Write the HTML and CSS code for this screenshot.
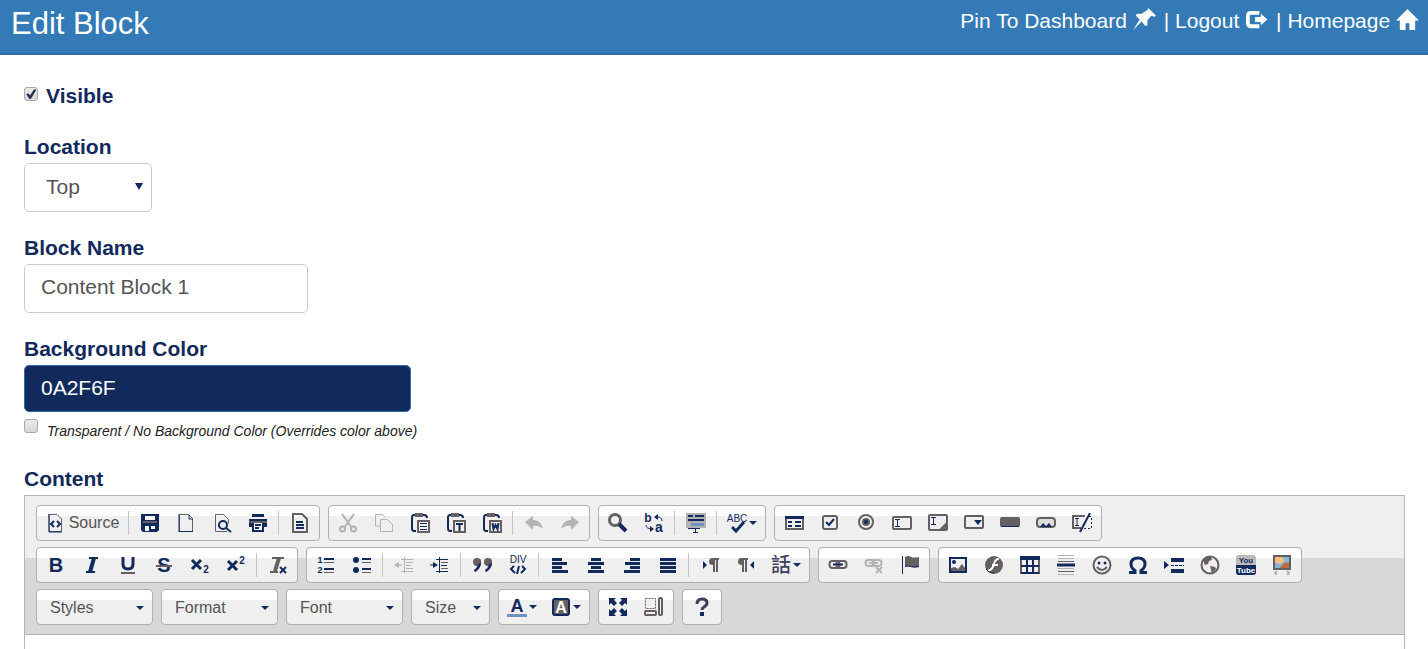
FILE: index.html
```html
<!DOCTYPE html>
<html lang="en">

<head>
    <meta charset="UTF-8">
    <title>Edit Block</title>
    <link rel="stylesheet" href="styles.css">
</head>

<body>
    <!-- icons -->
    <svg class="sprite" aria-hidden="true">
        <symbol id="i-pin" viewBox="0 0 24 24"><path d="M16 0l8 8-2 1-3-1-4 5 0 5-2 1-4-5-9 9 7-11-4-4 1-2h5l6-4z" fill="#fff"/></symbol>
        <symbol id="i-logout" viewBox="0 0 24 24"><path d="M15 5H6Q3 5 3 8v8q0 3 3 3h9" fill="none" stroke="#fff" stroke-width="4"/><path d="M10 9h6V5l8 7-8 7v-4h-6z" fill="#fff" stroke="#337ab7" stroke-width="1"/></symbol>
        <symbol id="i-home" viewBox="0 0 24 24"><path d="M12 1l12 12h-4v10h-6v-7h-4v7H4V13H0z" fill="#fff"/></symbol>

        <symbol id="i-source" viewBox="0 0 20 20"><path class="g" d="M4 1.500h8l4.500 4.500v12.500H4z"/><path class="n" d="M4 1v18h13"/><path class="n2" d="M9 8l-3 3 3 3M12 8l3 3-3 3"/></symbol>
        <symbol id="i-save" viewBox="0 0 20 20"><path class="fn" d="M1 1h18v16l-2 2H3l-2-2z"/><path class="w" d="M5 3h10v4H5zM5 13h4v5H5zM11 13h4v3h-4z"/><path class="fg" d="M3 8h14v2H3z"/></symbol>
        <symbol id="i-new" viewBox="0 0 20 20"><path class="g" d="M3.500 1.500h9l4 4v13h-13z"/><path class="n" d="M3 1v18M3 18.500h14M13 2v4h4"/></symbol>
        <symbol id="i-preview" viewBox="0 0 20 20"><path class="g" d="M15 18.500H3.500v-17h8l5 5v4"/><circle class="n2" cx="11" cy="12" r="4"/><path class="n2" d="M14 15l5 4"/></symbol>
        <symbol id="i-print" viewBox="0 0 20 20"><path class="fn" d="M4 1h12v3H4zM1 6h18v8h-3v5H4v-5H1z"/><path class="fg" d="M1 8h18v2H1z"/><path class="w" d="M6 10h8v7H6z"/><path class="n2" d="M7 12h6M7 15h4"/></symbol>
        <symbol id="i-template" viewBox="0 0 20 20"><path class="g2" d="M3 1h9l5 5v13H3z"/><path class="n2" d="M6 9h7M6 12h8M6 15h8"/></symbol>

        <symbol id="i-cut" viewBox="0 0 20 20"><path class="l2" d="M4 1l10 14M16 1L6 15"/><circle class="l2" cx="4.500" cy="16" r="2.500"/><circle class="l2" cx="15.500" cy="16" r="2.500"/></symbol>
        <symbol id="i-copy" viewBox="0 0 20 20"><path class="l" d="M6 13H1.500V1.500h7l3 3"/><path class="l" d="M6.500 6.500h7l5 5v7h-12z"/></symbol>
        <symbol id="i-clip" viewBox="0 0 20 20"><path class="n2" d="M6 18H4q-2 0-2-3V5q0-3 2-3h2M12 2h2q3 0 3 3"/><path class="fg" d="M5 0h8v4H5z"/><path class="g2" d="M8 8h11v11H8z"/></symbol>
        <symbol id="i-paste" viewBox="0 0 20 20"><use href="#i-clip"/><path class="n" d="M10 10.500h7M10 13.500h7M10 16.500h7"/></symbol>
        <symbol id="i-pastetext" viewBox="0 0 20 20"><use href="#i-clip"/><path class="n2" d="M10 11h7M13.500 11v7"/></symbol>
        <symbol id="i-pasteword" viewBox="0 0 20 20"><use href="#i-clip"/><path class="n2" d="M10.500 10l1 6 2-4 2 4 1-6"/></symbol>
        <symbol id="i-undo" viewBox="0 0 20 20"><path class="fl" d="M1 9l8-6v4q8 0 10 9-4-4-10-3v4z"/></symbol>
        <symbol id="i-redo" viewBox="0 0 20 20"><path class="fl" d="M19 9l-8-6v4q-8 0-10 9 4-4 10-3v4z"/></symbol>

        <symbol id="i-find" viewBox="0 0 20 20"><circle cx="7" cy="7" r="5.500" fill="none" stroke="#665f62" stroke-width="3"/><path d="M11 11l7 7" stroke="#12295c" stroke-width="4"/></symbol>
        <symbol id="i-selectall" viewBox="0 0 20 20"><path d="M0 0h20v15H0z" fill="#b1b1b1"/><path class="fn" d="M2 2h5v2H2zM9 2h9v2H9zM2 6h16v2H2z"/><path d="M5 10h13v3H5z" fill="#6b93bd"/><path class="n" d="M2 15.500h12M7 15.500h5M7 19.500h5M9.500 16v4"/></symbol>

        <symbol id="i-form" viewBox="0 0 20 20"><path class="g2" d="M2 4h17v12H2z"/><path class="fn" d="M1 3h19v3H1zM4 8h4v2H4zM4 12h4v2H4zM11 8h6v2h-6zM11 12h6v2h-6z"/></symbol>
        <symbol id="i-checkbox" viewBox="0 0 20 20"><rect class="g2" x="3" y="3" width="14" height="13" rx="2"/><path class="n2" d="M6 9l3 3 5-6"/></symbol>
        <symbol id="i-radio" viewBox="0 0 20 20"><circle class="g2" cx="10" cy="9" r="7"/><circle class="fg" cx="10" cy="9" r="4"/><circle class="fn" cx="10" cy="9" r="2"/></symbol>
        <symbol id="i-textfield" viewBox="0 0 20 20"><rect class="g2" x="1" y="4" width="18" height="12" rx="1"/><path class="n" d="M3 6.500h5M5.500 6v7M3 13.500h5"/></symbol>
        <symbol id="i-textarea" viewBox="0 0 20 20"><rect class="g2" x="1" y="2" width="18" height="15" rx="1"/><path class="n" d="M3 4.500h5M5.500 4v7M3 11.500h5"/><path class="g2" d="M12 17l7-7M15 17l4-4"/></symbol>
        <symbol id="i-select" viewBox="0 0 20 20"><rect class="g2" x="1" y="3" width="18" height="12" rx="1"/><path class="fn" d="M10 7h8l-4 5z"/></symbol>
        <symbol id="i-button" viewBox="0 0 20 20"><rect class="fg" x="0" y="4" width="20" height="10" rx="2"/><path class="n" d="M1 13.500h18"/></symbol>
        <symbol id="i-imgbutton" viewBox="0 0 20 20"><rect x="1" y="5" width="18" height="9" rx="3" fill="#ddd" stroke="#665f62" stroke-width="2"/><path class="fn" d="M4 14l3-4 3 3 3-3 3 4z"/></symbol>
        <symbol id="i-hidden" viewBox="0 0 20 20"><path class="g2" d="M13 3H1v12h8"/><path class="n" d="M3 5.500h4M5 5v7M3 12.500h4"/><path class="n2" d="M18 0L8 19"/><path class="n" stroke-dasharray="2 2" d="M17 3.500h2.500v12h-8"/></symbol>

        <symbol id="i-italic" viewBox="0 0 20 20"><path class="n2" d="M7 3h9M4 17h9"/><path d="M12 3L8 17" stroke="#12295c" stroke-width="4"/></symbol>
        <symbol id="i-underline" viewBox="0 0 20 20"><path class="n3" d="M5 2v7q0 5 5 5t5-5V2"/><path class="g2" d="M3 18h14"/></symbol>
        <symbol id="i-clear" viewBox="0 0 20 20"><path d="M4 3h12M2 17h8" class="g2"/><path d="M11 3L7 16" stroke="#665f62" stroke-width="4"/><path class="n2" d="M12 12l6 6M18 12l-6 6"/></symbol>

        <symbol id="i-ul" viewBox="0 0 20 20"><circle class="fn" cx="4" cy="5" r="3"/><circle class="fn" cx="4" cy="15" r="3"/><path class="n2" d="M10 4h9M10 14h9"/><path class="g" d="M10 7.500h9M10 17.500h9"/></symbol>
        <symbol id="i-outdent" viewBox="0 0 20 20"><path class="l" d="M10.500 2v16M7 4.500h12M12 7.500h7M12 10.500h5M12 13.500h7M7 16.500h12M2 10h6"/><path class="fl" d="M0 10l5-3v6z"/></symbol>
        <symbol id="i-indent" viewBox="0 0 20 20"><path class="n" d="M9.500 2v16M6 4.500h12M11 10.500h6M6 16.500h12M0 10h6"/><path class="g" d="M11 7.500h7M11 13.500h7"/><path class="fn" d="M8 10L3 7v6z"/></symbol>
        <symbol id="i-quote" viewBox="0 0 20 20"><path class="fg" d="M1 7q0-4 4-4 5 0 4 6-1 5-6 8l-1-2q3-2 3-4-4 0-4-4zM12 7q0-4 4-4 5 0 4 6-1 5-6 8l-1-2q3-2 3-4-4 0-4-4z"/><path class="fn" d="M9 8q0 5-6 9l-1-2q4-2 4-6zM20 8q0 5-6 9l-1-2q4-2 4-6z"/></symbol>
        <symbol id="i-left" viewBox="0 0 20 20"><path class="n3" d="M2 4.500h10M2 12.500h10"/><path class="n3" d="M2 8.500h15M2 16.500h16"/></symbol>
        <symbol id="i-center" viewBox="0 0 20 20"><path class="n3" d="M5 4.500h10M5 12.500h10"/><path class="n3" d="M2 8.500h16M2 16.500h16"/></symbol>
        <symbol id="i-right" viewBox="0 0 20 20"><path class="n3" d="M8 4.500h10M8 12.500h10"/><path class="n3" d="M3 8.500h15M2 16.500h16"/></symbol>
        <symbol id="i-justify" viewBox="0 0 20 20"><path class="n3" d="M2 4.500h16M2 8.500h16M2 12.500h16M2 16.500h16"/></symbol>
        <symbol id="i-ltr" viewBox="0 0 20 20"><path class="fn" d="M3 6l4 4-4 4z"/><path class="fg" d="M12 3h7v2h-1v12h-2V5h-1v12h-2v-7q-4 0-4-3 0-4 3-4z"/></symbol>
        <symbol id="i-rtl" viewBox="0 0 20 20"><path class="fn" d="M18 6l-4 4 4 4z"/><path class="fg" d="M5 3h7v2h-1v12H9V5H8v12H6v-7q-4 0-4-3 0-4 3-4z"/></symbol>

        <symbol id="i-link" viewBox="0 0 20 20"><rect class="g2" x="1.500" y="6" width="10" height="7" rx="3"/><rect class="g2" x="8.500" y="6" width="10" height="7" rx="3"/><path class="n2" d="M5 9.500h10"/></symbol>
        <symbol id="i-unlink" viewBox="0 0 20 20"><rect class="l2" x="1.500" y="5" width="9" height="6" rx="3"/><rect class="l2" x="8.500" y="5" width="9" height="6" rx="3"/><path class="l2" d="M5 8h9M12 12l6 6M18 12l-6 6"/></symbol>
        <symbol id="i-flag" viewBox="0 0 20 20"><path class="n" d="M2.500 1v18"/><path class="fg" d="M5 2q4-2 6 0 3 1 8 0v10q-5 1-8 0-3-2-6 0z"/><path class="n" d="M5 11.500q3-1 6 0 3 1 8 0"/></symbol>

        <symbol id="i-image" viewBox="0 0 20 20"><path class="n2" d="M2 3h16v14H2z"/><circle class="fn" cx="6" cy="7" r="2"/><path class="fg" d="M3 16v-3l4-1 3 2 4-5 3 4v3z"/></symbol>
        <symbol id="i-flash" viewBox="0 0 20 20"><circle class="fg" cx="10" cy="10" r="9"/><path d="M15 4q-4 0-5 5t-6 7M8 10h6" fill="none" stroke="#fff" stroke-width="2"/><path class="n" d="M2 14q2 4 8 4"/></symbol>
        <symbol id="i-table" viewBox="0 0 20 20"><path class="g2" d="M1 4v14h18V4"/><path class="n2" d="M7 5v13M13 5v13M1 11h18M1 18h18"/><path class="fn" d="M0 1h20v4H0z"/></symbol>
        <symbol id="i-hr" viewBox="0 0 20 20"><path class="l" d="M2 .500h16M2 3.500h16M2 13.500h16M2 19.500h16"/><path class="g" d="M2 6.500h16M2 16.500h16"/><path class="n3" d="M1 10h18"/></symbol>
        <symbol id="i-smiley" viewBox="0 0 20 20"><circle class="g2" cx="10" cy="10" r="8.500"/><circle class="fn" cx="7" cy="8" r="1.500"/><circle class="fn" cx="13" cy="8" r="1.500"/><path class="g2" d="M5 12q5 6 10 0"/></symbol>
        <symbol id="i-omega" viewBox="0 0 20 20"><path class="n3" d="M1 17.500h6v-2Q3 13 3 9q0-6 7-6t7 6q0 4-4 6.500v2h6"/></symbol>
        <symbol id="i-pagebreak" viewBox="0 0 20 20"><path class="fn" d="M0 6l5 4-5 4z"/><path class="fn" d="M7 3h13v4H7zM7 14h13v4H7z"/><path class="n" stroke-dasharray="3 1" d="M7 10.500h13"/></symbol>
        <symbol id="i-globe" viewBox="0 0 20 20"><circle class="g2" cx="10" cy="10" r="8.500"/><path class="fg" d="M3 5q4-4 8-3l1 3-3 1-1 3-3 1zM10 11l5 1 1 2-4 4-1-3z"/></symbol>
        <symbol id="i-slide" viewBox="0 0 20 20"><path d="M2 1h16v13H2z" fill="#82b6dc" stroke="#665f62" stroke-width="2"/><path d="M3 2h7l3 4-5 3-5-1z" fill="#f5bd83"/><path d="M8 13q4-7 9-5v5z" fill="#bf6b3b"/><path class="l2" d="M5 16l-2 2 2 2M15 16l2 2-2 2"/></symbol>

        <symbol id="i-maximize" viewBox="0 0 20 20"><path class="fn" d="M1 1h7L6 3l3 3-3 3-3-3-2 2zM19 1h-7l2 2-3 3 3 3 3-3 2 2zM1 19h7l-2-2 3-3-3-3-3 3-2-2zM19 19h-7l2-2-3-3 3-3 3 3 2-2z"/></symbol>
        <symbol id="i-blocks" viewBox="0 0 20 20"><path class="g" stroke-dasharray="2 1" d="M1.500 1.500h10v10h-10z"/><rect class="g2" x="1" y="14" width="11" height="4" rx="1"/><rect class="g2" x="15" y="1" width="3" height="17" rx="1"/></symbol>
        <symbol id="i-about" viewBox="0 0 20 20"><path d="M5 7q0-5 5-5t5 4q0 2-3 4-2 1-2 3" fill="none" stroke="#3d3f58" stroke-width="3"/><path class="fn" d="M8 15h4v4H8z"/></symbol>
    </svg>

    <header class="header">
        <h1>Edit Block</h1>
        <nav class="header-links">
            <a href="#">Pin To Dashboard <svg><use href="#i-pin"/></svg></a><span class="bar">|</span>
            <a href="#">Logout <svg><use href="#i-logout"/></svg></a><span class="bar">|</span>
            <a href="#">Homepage <svg><use href="#i-home"/></svg></a>
        </nav>
    </header>

    <form class="edit-form">
        <div class="check-row visible-row">
            <input type="checkbox" id="visible" checked>
            <label class="label" for="visible">Visible</label>
        </div>

        <div class="form-group">
            <label class="label" for="location">Location</label>
            <div class="select-box">
                <select class="control" id="location">
                    <option>Top</option>
                    <option>Bottom</option>
                </select>
            </div>
        </div>

        <div class="form-group">
            <label class="label" for="block_name">Block Name</label>
            <input class="control name" type="text" id="block_name" value="Content Block 1">
        </div>

        <div class="form-group">
            <label class="label" for="bg_color">Background Color</label>
            <input class="control color" type="text" id="bg_color" value="0A2F6F">
            <div class="check-row note-row">
                <input type="checkbox" id="transparent">
                <label class="note" for="transparent">Transparent / No Background Color (Overrides color above)</label>
            </div>
        </div>

        <div class="label" id="content_label">Content</div>
        <div class="editor">
            <div class="toolbar" role="toolbar">
                <div class="tool-row">
                    <div class="group">
                        <button type="button" class="btn source"><svg><use href="#i-source"/></svg>Source</button>
                        <span class="sep"></span>
                        <button type="button" class="btn" title="Save"><svg><use href="#i-save"/></svg></button>
                        <button type="button" class="btn" title="New Page"><svg><use href="#i-new"/></svg></button>
                        <button type="button" class="btn" title="Preview"><svg><use href="#i-preview"/></svg></button>
                        <button type="button" class="btn" title="Print"><svg><use href="#i-print"/></svg></button>
                        <span class="sep"></span>
                        <button type="button" class="btn" title="Templates"><svg><use href="#i-template"/></svg></button>
                    </div>
                    <div class="group">
                        <button type="button" class="btn" title="Cut" disabled><svg><use href="#i-cut"/></svg></button>
                        <button type="button" class="btn" title="Copy" disabled><svg><use href="#i-copy"/></svg></button>
                        <button type="button" class="btn" title="Paste"><svg><use href="#i-paste"/></svg></button>
                        <button type="button" class="btn" title="Paste as plain text"><svg><use href="#i-pastetext"/></svg></button>
                        <button type="button" class="btn" title="Paste from Word"><svg><use href="#i-pasteword"/></svg></button>
                        <span class="sep"></span>
                        <button type="button" class="btn" title="Undo" disabled><svg><use href="#i-undo"/></svg></button>
                        <button type="button" class="btn" title="Redo" disabled><svg><use href="#i-redo"/></svg></button>
                    </div>
                    <div class="group">
                        <button type="button" class="btn" title="Find"><svg><use href="#i-find"/></svg></button>
                        <button type="button" class="btn" title="Replace"><svg viewBox="0 0 20 20"><text x="4" y="9" class="t t12">b</text><text x="15" y="19" class="t t14">a</text><path class="n" d="M18 8q0-4-5-4M2 12q0 4 7 4"/><path class="fn" d="M10 4l4-3v6zM10 16l-4-3v6z"/></svg></button>
                        <span class="sep"></span>
                        <button type="button" class="btn" title="Select All"><svg><use href="#i-selectall"/></svg></button>
                        <span class="sep"></span>
                        <button type="button" class="btn drop" title="Spell Check"><svg viewBox="0 0 20 20"><text x="10" y="9" class="t r t10">ABC</text><path class="n3" d="M5 14l4 4 8-9"/></svg></button>
                    </div>
                    <div class="group">
                        <button type="button" class="btn" title="Form"><svg><use href="#i-form"/></svg></button>
                        <button type="button" class="btn" title="Checkbox"><svg><use href="#i-checkbox"/></svg></button>
                        <button type="button" class="btn" title="Radio Button"><svg><use href="#i-radio"/></svg></button>
                        <button type="button" class="btn" title="Text Field"><svg><use href="#i-textfield"/></svg></button>
                        <button type="button" class="btn" title="Textarea"><svg><use href="#i-textarea"/></svg></button>
                        <button type="button" class="btn" title="Selection Field"><svg><use href="#i-select"/></svg></button>
                        <button type="button" class="btn" title="Button"><svg><use href="#i-button"/></svg></button>
                        <button type="button" class="btn" title="Image Button"><svg><use href="#i-imgbutton"/></svg></button>
                        <button type="button" class="btn" title="Hidden Field"><svg><use href="#i-hidden"/></svg></button>
                    </div>
                </div>

                <div class="tool-row">
                    <div class="group">
                        <button type="button" class="btn" title="Bold"><svg viewBox="0 0 20 20"><text x="10" y="17" class="t t20">B</text></svg></button>
                        <button type="button" class="btn" title="Italic"><svg><use href="#i-italic"/></svg></button>
                        <button type="button" class="btn" title="Underline"><svg><use href="#i-underline"/></svg></button>
                        <button type="button" class="btn" title="Strikethrough"><svg viewBox="0 0 20 20"><text x="10" y="17" class="t t20">S</text><path class="g2" d="M2 11h16"/></svg></button>
                        <button type="button" class="btn" title="Subscript"><svg viewBox="0 0 20 20"><path class="n3" d="M2 5l9 9M11 5l-9 9"/><text x="16" y="18" class="t t10">2</text></svg></button>
                        <button type="button" class="btn" title="Superscript"><svg viewBox="0 0 20 20"><path class="n3" d="M2 6l9 9M11 6l-9 9"/><text x="16" y="9" class="t t10">2</text></svg></button>
                        <span class="sep"></span>
                        <button type="button" class="btn" title="Remove Format"><svg><use href="#i-clear"/></svg></button>
                    </div>
                    <div class="group">
                        <button type="button" class="btn" title="Numbered List"><svg viewBox="0 0 20 20"><text x="4" y="8" class="t t9">1</text><text x="4" y="18" class="t t9">2</text><path class="n2" d="M8 4h10M8 14h10"/><path class="g" d="M8 7.500h10M8 17.500h10"/></svg></button>
                        <button type="button" class="btn" title="Bulleted List"><svg><use href="#i-ul"/></svg></button>
                        <span class="sep"></span>
                        <button type="button" class="btn" title="Decrease Indent" disabled><svg><use href="#i-outdent"/></svg></button>
                        <button type="button" class="btn" title="Increase Indent"><svg><use href="#i-indent"/></svg></button>
                        <span class="sep"></span>
                        <button type="button" class="btn" title="Block Quote"><svg><use href="#i-quote"/></svg></button>
                        <button type="button" class="btn" title="Div Container"><svg viewBox="0 0 20 20"><text x="10" y="8" class="t r t10">DIV</text><path class="n2" d="M6 11l-3 3 4 4M14 11l3 3-4 4M11 11l-2 8"/></svg></button>
                        <span class="sep"></span>
                        <button type="button" class="btn" title="Align Left"><svg><use href="#i-left"/></svg></button>
                        <button type="button" class="btn" title="Center"><svg><use href="#i-center"/></svg></button>
                        <button type="button" class="btn" title="Align Right"><svg><use href="#i-right"/></svg></button>
                        <button type="button" class="btn" title="Justify"><svg><use href="#i-justify"/></svg></button>
                        <span class="sep"></span>
                        <button type="button" class="btn" title="Left to right"><svg><use href="#i-ltr"/></svg></button>
                        <button type="button" class="btn" title="Right to left"><svg><use href="#i-rtl"/></svg></button>
                        <button type="button" class="btn drop" title="Language"><svg viewBox="0 0 20 20"><text x="10" y="17" class="cjk">話</text></svg></button>
                    </div>
                    <div class="group">
                        <button type="button" class="btn" title="Link"><svg><use href="#i-link"/></svg></button>
                        <button type="button" class="btn" title="Unlink" disabled><svg><use href="#i-unlink"/></svg></button>
                        <button type="button" class="btn" title="Anchor"><svg><use href="#i-flag"/></svg></button>
                    </div>
                    <div class="group">
                        <button type="button" class="btn" title="Image"><svg><use href="#i-image"/></svg></button>
                        <button type="button" class="btn" title="Flash"><svg><use href="#i-flash"/></svg></button>
                        <button type="button" class="btn" title="Table"><svg><use href="#i-table"/></svg></button>
                        <button type="button" class="btn" title="Horizontal Line"><svg><use href="#i-hr"/></svg></button>
                        <button type="button" class="btn" title="Smiley"><svg><use href="#i-smiley"/></svg></button>
                        <button type="button" class="btn" title="Special Character"><svg><use href="#i-omega"/></svg></button>
                        <button type="button" class="btn" title="Page Break"><svg><use href="#i-pagebreak"/></svg></button>
                        <button type="button" class="btn" title="IFrame"><svg><use href="#i-globe"/></svg></button>
                        <button type="button" class="btn" title="YouTube"><svg viewBox="0 0 20 20"><rect x="0" y="0" width="20" height="20" rx="3" fill="#bbb"/><path class="fn" d="M0 10h20v7q0 3-3 3H3q-3 0-3-3z"/><text x="10" y="8" class="t t8">You</text><text x="10" y="18" class="t t8 white">Tube</text></svg></button>
                        <button type="button" class="btn" title="Slideshow"><svg><use href="#i-slide"/></svg></button>
                    </div>
                </div>

                <div class="tool-row">
                    <div class="group combo"><select aria-label="Styles"><option>Styles</option></select></div>
                    <div class="group combo"><select aria-label="Format"><option>Format</option></select></div>
                    <div class="group combo"><select aria-label="Font"><option>Font</option></select></div>
                    <div class="group combo small"><select aria-label="Size"><option>Size</option></select></div>
                    <div class="group">
                        <button type="button" class="btn drop" title="Text Color"><svg viewBox="0 0 20 20"><text x="10" y="15" class="t t18">A</text><path d="M0 17h20v3H0z" fill="#6b93bd"/></svg></button>
                        <button type="button" class="btn drop" title="Background Color"><svg viewBox="0 0 20 20"><rect x="2" y="2" width="16" height="16" rx="2" fill="#665f62" stroke="#12295c" stroke-width="2"/><text x="10" y="16" class="t t16 white">A</text></svg></button>
                    </div>
                    <div class="group">
                        <button type="button" class="btn" title="Maximize"><svg><use href="#i-maximize"/></svg></button>
                        <button type="button" class="btn" title="Show Blocks"><svg><use href="#i-blocks"/></svg></button>
                    </div>
                    <div class="group">
                        <button type="button" class="btn" title="About"><svg><use href="#i-about"/></svg></button>
                    </div>
                </div>
            </div>
            <div class="editor-body" contenteditable="true" role="textbox" aria-labelledby="content_label"></div>
        </div>
    </form>
</body>

</html>
```

FILE: styles.css
```css
* {
    box-sizing: border-box;
}

body {
    margin: 0;
    min-height: 100vh;
    display: flex;
    flex-direction: column;
    font-family: "Liberation Sans", Arial, sans-serif;
    font-size: 21px;
    line-height: 24px;
    color: #12295c;
    background: #fff;
}

input,
select,
button {
    font-family: inherit;
    margin: 0;
}

.sprite {
    position: absolute;
    width: 0;
    height: 0;
}

/* header */
.header {
    display: flex;
    justify-content: space-between;
    align-items: flex-start;
    min-height: 55px;
    padding: 7px 9px 8px 11px;
    background: #337ab7;
    border-bottom: 2px solid #2e6da4;
    color: #fff;
}

.header h1 {
    margin: 0;
    font-size: 31px;
    font-weight: 400;
    line-height: 34px;
}

.header-links {
    line-height: 28px;
}

.header-links a {
    color: #fff;
    text-decoration: none;
}

.header-links .bar {
    margin-left: 8px;
}

.header-links svg {
    width: 23px;
    height: 23px;
    vertical-align: -3px;
}

/* form */
.edit-form {
    flex: 1;
    display: flex;
    flex-direction: column;
    padding: 29px 23px 0 24px;
}

.label {
    display: block;
    font-weight: 700;
    margin-bottom: 4px;
}

.form-group {
    margin-bottom: 24px;
}

.check-row {
    display: flex;
    gap: 8px;
}

.visible-row {
    margin-bottom: 23px;
}

.note-row {
    margin-top: 7px;
    gap: 9px;
}

.note {
    font-size: 14px;
    font-style: italic;
    color: #222;
}

input[type="checkbox"] {
    appearance: none;
    flex: none;
    width: 14px;
    height: 14px;
    margin-top: 3px;
    border: 1px solid #aaa;
    border-radius: 3px;
    background: linear-gradient(#ececec, #d6d6d6);
}

.note-row input[type="checkbox"] {
    margin-top: 0;
}

input[type="checkbox"]:checked::before {
    content: "";
    display: block;
    height: 12px;
    background: #25304f;
    clip-path: polygon(10% 50%, 30% 45%, 42% 62%, 75% 10%, 95% 15%, 50% 90%, 35% 90%);
}

.control {
    display: block;
    height: 49px;
    padding: 0 16px 4px;
    border: 1px solid #ccc;
    border-radius: 5px;
    background: #fff;
    font-size: 21px;
    color: #555;
}

select {
    appearance: none;
}

.select-box {
    position: relative;
    width: 128px;
}

.select-box .control {
    width: 100%;
    padding: 0 21px 2px;
}

.select-box::after {
    content: "";
    position: absolute;
    top: 20px;
    right: 9px;
    width: 8px;
    height: 7px;
    background: #12295c;
    clip-path: polygon(0 0, 100% 0, 50% 100%);
}

.name {
    width: 284px;
}

.control.color {
    width: 387px;
    height: 47px;
    padding-bottom: 2px;
    background: #12295c;
    border-color: #2e6da4;
    color: #fff;
}

/* editor */
.editor {
    flex: 1;
    display: flex;
    flex-direction: column;
    border: 1px solid #b6b6b6;
    border-bottom: 0;
}

.toolbar {
    display: flex;
    flex-direction: column;
    gap: 6px;
    padding: 9px 11px;
    border-bottom: 1px solid #b6b6b6;
    background: linear-gradient(#efefef 62px, #d7d9d8 62px);
}

.tool-row {
    display: flex;
    flex-wrap: wrap;
    gap: 6px 8px;
}

.group {
    display: flex;
    align-items: center;
    height: 36px;
    padding: 0 1px;
    border: 1px solid #b0b0b0;
    border-radius: 4px;
    background: linear-gradient(#fff 10px, #efefef 10px);
}

.btn {
    display: flex;
    align-items: center;
    justify-content: center;
    width: 36px;
    height: 34px;
    padding: 0;
    border: 0;
    background: none;
    font-size: 16px;
    color: #555;
}

.btn svg {
    flex: none;
    width: 20px;
    height: 20px;
}

.btn.source {
    width: 88px;
    gap: 4px;
}

.btn.drop {
    width: 44px;
    gap: 2px;
}

.drop::after,
.combo::after {
    content: "";
    border: 4px solid transparent;
    border-top-color: #12295c;
    border-bottom: 0;
}

.sep {
    width: 1px;
    height: 24px;
    margin: 0 3px 0 2px;
    background: #c4c4c4;
}

.combo {
    position: relative;
    width: 117px;
}

.combo.small {
    width: 79px;
}

.combo select {
    width: 100%;
    height: 34px;
    padding: 0 20px 0 12px;
    border: 0;
    background: none;
    font-size: 16px;
    color: #555;
}

.combo::after {
    position: absolute;
    right: 8px;
    top: 16px;
}

.editor-body {
    flex: 1;
    min-height: 12px;
}

/* icon strokes (n = navy, g = grey, l = disabled) and fills */
.n, .n2, .n3, .g, .g2, .l, .l2 {
    fill: none;
}

.n, .n2, .n3 {
    stroke: #12295c;
}

.g, .g2 {
    stroke: #665f62;
}

.l, .l2 {
    stroke: #b3b3b3;
}

.n2, .g2, .l2 {
    stroke-width: 2;
}

.n3 {
    stroke-width: 3;
}

.fn {
    fill: #12295c;
}

.fg {
    fill: #665f62;
}

.fl {
    fill: #b3b3b3;
}

.w {
    fill: #f4f4f4;
}

.t {
    font-family: "Liberation Sans", Arial, sans-serif;
    font-weight: 700;
    fill: #12295c;
    text-anchor: middle;
}

.r {
    font-weight: 400;
}

.white {
    fill: #fff;
}

.cjk {
    font-family: "Noto Sans CJK TC", sans-serif;
    font-size: 20px;
    font-weight: 500;
    fill: #3d3f58;
    text-anchor: middle;
}

.t8 {
    font-size: 8px;
}

.t9 {
    font-size: 9px;
}

.t10 {
    font-size: 10px;
}

.t12 {
    font-size: 12px;
}

.t14 {
    font-size: 14px;
}

.t16 {
    font-size: 16px;
}

.t18 {
    font-size: 18px;
}

.t20 {
    font-size: 20px;
}
```
